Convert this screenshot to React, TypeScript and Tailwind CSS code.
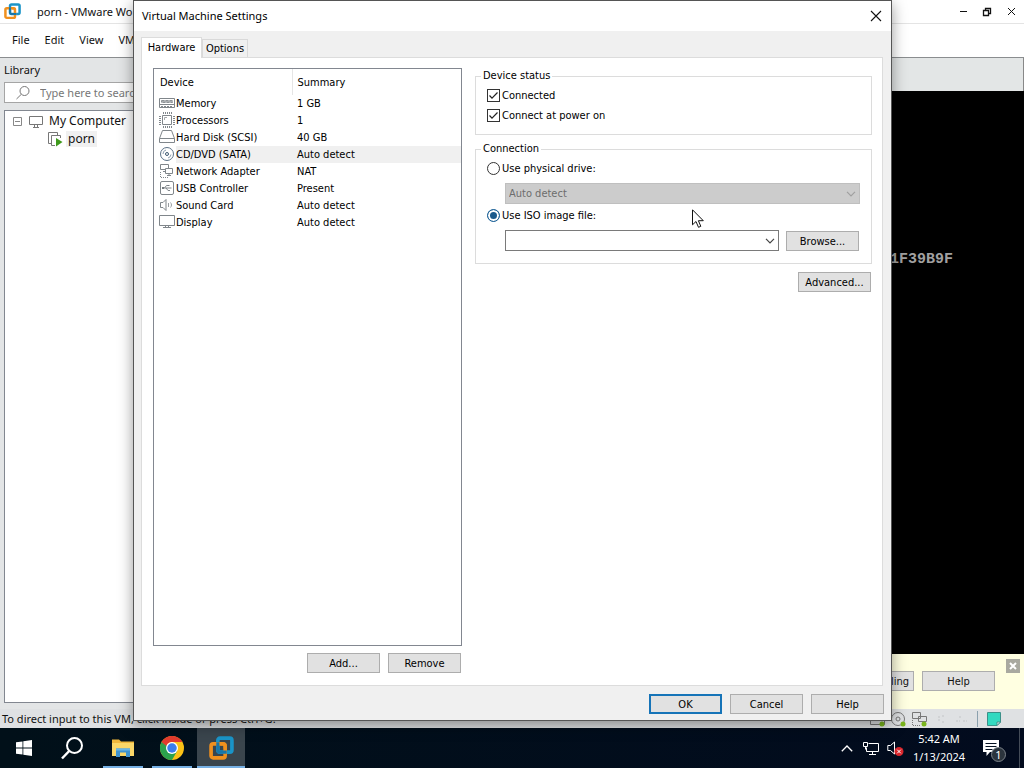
import { useState, type ReactNode } from "react";
import clsx from "clsx";

const green = "#7ab51d";

function VmwareLogo({ className }: { className?: string }) {
  return (
    <svg viewBox="0 0 24 24" className={className} fill="none" strokeWidth="3.500">
      <rect x="8.500" y="2" width="13.500" height="13.500" rx="2" stroke="#1a94c8" />
      <rect x="2" y="7.500" width="13.500" height="13.500" rx="2" stroke="#f0901e" />
      <path d="M8.500 6v7.500a2 2 0 0 0 2 2H17" stroke="#1a76a8" strokeWidth="3" />
      <path d="M11 7.500h2.500a2 2 0 0 1 2 2V12" stroke="#f0901e" strokeWidth="3" />
    </svg>
  );
}

function Chevron({ className }: { className?: string }) {
  return (
    <svg viewBox="0 0 10 6" className={className} fill="none" stroke="currentColor" strokeWidth="1.2">
      <path d="M1 0.800 5 4.800 9 0.800" />
    </svg>
  );
}

function DeviceIcon({ children }: { children: ReactNode }) {
  return (
    <svg viewBox="0 0 17 17" className="block h-[17px] w-[17px] shrink-0" fill="none" stroke="#80868b">
      {children}
    </svg>
  );
}

const devices = [
  {
    name: "Memory",
    summary: "1 GB",
    icon: (
      <>
        <path d="M.5 3.500h15v9H.5zM1 9.500h14" />
        <path d="M2.500 5.500h11v2h-11z" fill="#a9adb0" stroke="#8d9296" strokeDasharray="3 1" />
        <path d="M2 11.500h12" strokeDasharray="2 1" />
      </>
    ),
  },
  {
    name: "Processors",
    summary: "1",
    icon: (
      <>
        <path d="M3.500 3.500h9v9h-9z" />
        <path d="M5.500 8v-2.500h2.500" stroke="#a5a9ac" />
        <path d="M4 1.500h9M4 14.500h9M4 .5h9M4 15.500h9" strokeDasharray="1 1" />
        <path d="M.5 4v9M1.500 4v9M14.500 4v9M15.500 4v9" strokeDasharray="1 1" />
      </>
    ),
  },
  {
    name: "Hard Disk (SCSI)",
    summary: "40 GB",
    icon: <path d="M3.500 1.500h9l3 8v4H.5v-4zM.5 9.500h15" />,
  },
  {
    name: "CD/DVD (SATA)",
    summary: "Auto detect",
    icon: (
      <>
        <circle cx="8" cy="8" r="6.500" stroke="#5b7186" />
        <circle cx="8" cy="8" r="1.500" stroke="#3f5a73" />
        <path d="M4 8a4 4 0 0 1 3-4M12 8.500a4 4 0 0 1-3 3.500" stroke="#8fa0b0" />
      </>
    ),
  },
  {
    name: "Network Adapter",
    summary: "NAT",
    icon: (
      <>
        <path d="M1.500 1.500h8v5h-8zM4 8.500h3" />
        <path d="M6.500 5.500h7v5h-7z" fill="#fff" />
        <path d="M10 11v2M8 12.500h4" />
        <path d="M1.500 9v5.500h8" strokeDasharray="1 1" />
      </>
    ),
  },
  {
    name: "USB Controller",
    summary: "Present",
    icon: (
      <>
        <rect x="1.500" y="1.500" width="13" height="13" rx="1.500" />
        <path d="M3.500 8h9M5.500 8l2-2.500h2M7 8l2 2.500h2" />
        <path d="M3 7h2v2H3zM9 5h1.500v1H9z" fill="#757b80" stroke="none" />
      </>
    ),
  },
  {
    name: "Sound Card",
    summary: "Auto detect",
    icon: (
      <>
        <path d="M1.500 5.500h2.500l3-3v11l-3-3H1.500z" />
        <path d="M9.500 6v4M11.500 5.500c1.300 1.500 1.300 3.500 0 5" stroke="#989da1" />
      </>
    ),
  },
  {
    name: "Display",
    summary: "Auto detect",
    icon: <path d="M.5 1.500h15v10H.5zM4 13.500h8M6.500 12v1M9.500 12v1" />,
  },
];

function DialogButton({ children, primary }: { children: ReactNode; primary?: boolean }) {
  return (
    <button
      type="button"
      className={clsx(
        "flex h-5 w-[73px] shrink-0 items-center justify-center bg-[#e1e1e1] pt-0.5 text-[11px] leading-4",
        primary ? "border-2 border-[#1674b8]" : "border border-[#adadad]"
      )}
    >
      {children}
    </button>
  );
}

function DeviceTable() {
  const [selected, setSelected] = useState("CD/DVD (SATA)");

  return (
    <div className="flex-1 border border-[#828790] bg-white">
      <table className="w-full table-fixed border-collapse text-left">
        <colgroup>
          <col className="w-[138px]" />
          <col />
        </colgroup>
        <thead>
          <tr className="h-[26px]">
            <th className="border-r border-[#e5e5e5] pb-0 pl-1.5 pt-0.5 font-normal">Device</th>
            <th className="pb-0 pl-[5px] pt-0.5 font-normal">Summary</th>
          </tr>
        </thead>
        <tbody>
          {devices.map((device) => (
            <tr key={device.name} className="h-[17px]" onClick={() => setSelected(device.name)}>
              <td className="p-0 pl-[5px]">
                <div className="flex h-[17px] items-center">
                  <DeviceIcon>{device.icon}</DeviceIcon>
                  <span className={clsx("flex-1 whitespace-nowrap leading-[17px]", selected === device.name && "bg-[#f0f0f0]")}>
                    {device.name}
                  </span>
                </div>
              </td>
              <td className={clsx("p-0 pl-[5px] leading-[17px]", selected === device.name && "bg-[#f0f0f0]")}>
                {device.summary}
              </td>
            </tr>
          ))}
        </tbody>
      </table>
    </div>
  );
}

function CheckRow({ id, label }: { id: string; label: string }) {
  return (
    <div className="flex h-5 items-center gap-0.5">
      <span className="relative h-[13px] w-[13px]">
        <input
          id={id}
          type="checkbox"
          defaultChecked
          className="peer block h-[13px] w-[13px] appearance-none border border-[#333] bg-white"
        />
        <svg
          viewBox="0 0 13 13"
          className="pointer-events-none absolute inset-0 hidden peer-checked:block"
          fill="none"
          stroke="#222"
          strokeWidth="1.200"
        >
          <path d="M2.500 6.500 5 9.200 10.500 3.500" />
        </svg>
      </span>
      <label htmlFor={id} className="pt-0.5">{label}</label>
    </div>
  );
}

function RadioRow({ id, label, checked, onChange }: { id: string; label: string; checked: boolean; onChange: () => void }) {
  return (
    <div className="flex h-5 items-center gap-0.5">
      <input
        id={id}
        type="radio"
        name="connection"
        checked={checked}
        onChange={onChange}
        className="h-[13px] w-[13px] appearance-none rounded-full border border-[#333] bg-white checked:border-[#1b6299] checked:bg-[#1b5a8c] checked:shadow-[inset_0_0_0_2px_white]"
      />
      <label htmlFor={id} className="pt-0.5">{label}</label>
    </div>
  );
}

function ConnectionSettings() {
  const [source, setSource] = useState("iso");

  return (
    <div className="flex min-w-0 flex-1 flex-col pt-px">
      <fieldset className="border border-[#dcdcdc] pb-[9px] pl-[11px] pr-3">
        <legend className="-ml-1.5 px-0.5 leading-[14px]">Device status</legend>
        <div className="pt-0.5">
          <CheckRow id="connected" label="Connected" />
          <CheckRow id="power-on" label="Connect at power on" />
        </div>
      </fieldset>

      <fieldset className="mt-[7px] border border-[#dcdcdc] pb-3 pl-[11px] pr-[11px]">
        <legend className="-ml-1.5 px-0.5 leading-[14px]">Connection</legend>
        <div className="pt-0.5">
          <RadioRow id="physical" label="Use physical drive:" checked={source === "physical"} onChange={() => setSource("physical")} />
          <div className="relative ml-[18px] mt-[5px]">
            <select
              aria-label="Physical drive"
              disabled={source !== "physical"}
              className="block h-[21px] w-full appearance-none border border-[#bfbfbf] bg-[#cccccc] px-[3px] pt-px text-[#6d6d6d] opacity-100"
            >
              <option>Auto detect</option>
            </select>
            <Chevron className="pointer-events-none absolute right-1 top-2 h-1.5 w-2.5 text-[#a0a0a0]" />
          </div>
          <div className="mt-px">
            <RadioRow id="iso" label="Use ISO image file:" checked={source === "iso"} onChange={() => setSource("iso")} />
          </div>
          <div className="ml-[18px] mt-[5px] flex items-end gap-[7px] pr-px">
            <div className="relative flex-1">
              <select
                aria-label="ISO image file"
                className="block h-[21px] w-full appearance-none border border-[#7a7a7a] bg-white px-[3px]"
              >
                <option></option>
              </select>
              <Chevron className="pointer-events-none absolute right-1 top-2 h-1.5 w-2.5 text-[#444]" />
            </div>
            <DialogButton>Browse...</DialogButton>
          </div>
        </div>
      </fieldset>

      <div className="mt-2 flex justify-end pr-px">
        <DialogButton>Advanced...</DialogButton>
      </div>
    </div>
  );
}

function SettingsDialog() {
  return (
    <section className="absolute bottom-[47px] left-[133px] right-[132px] top-0 flex flex-col border border-[#555] bg-[#f0f0f0] font-['DejaVu_Sans_Condensed',sans-serif] text-[11px] leading-[14px] text-black shadow-[0_4px_14px_rgba(0,0,0,0.4)]">
      <header className="flex h-[30px] items-center justify-between bg-white pl-2 pr-[9px]">
        <h1 className="font-['Noto_Sans','Open_Sans',sans-serif]">Virtual Machine Settings</h1>
        <button type="button" aria-label="Close" className="h-3 w-3">
          <svg viewBox="0 0 12 12" stroke="#111" strokeWidth="1.100">
            <path d="M1 1l10 10M11 1 1 11" />
          </svg>
        </button>
      </header>

      <div className="flex flex-1 flex-col pl-[7px] pr-2 pt-1.5">
        <div role="tablist" className="flex items-end">
          <button
            type="button"
            role="tab"
            aria-selected="true"
            className="relative -mb-px h-[21px] w-[61px] border border-b-0 border-[#dcdcdc] bg-white leading-4"
          >
            Hardware
          </button>
          <button
            type="button"
            role="tab"
            aria-selected="false"
            className="h-[18px] w-[46px] border border-b-0 border-[#d9d9d9] bg-[#f0f0f0] leading-4"
          >
            Options
          </button>
        </div>
        <div className="flex flex-1 gap-[13px] border border-[#dcdcdc] bg-white pb-3 pl-[11px] pr-2.5 pt-2.5">
          <div className="flex w-[309px] shrink-0 flex-col">
            <DeviceTable />
            <div className="mt-[7px] flex justify-end gap-2 pr-px">
              <DialogButton>Add...</DialogButton>
              <DialogButton>Remove</DialogButton>
            </div>
          </div>
          <ConnectionSettings />
        </div>
      </div>

      <footer className="flex h-[34px] items-start justify-end gap-2 pr-[7px] pt-2">
        <DialogButton primary>OK</DialogButton>
        <DialogButton>Cancel</DialogButton>
        <DialogButton>Help</DialogButton>
      </footer>
    </section>
  );
}

function Library() {
  return (
    <aside className="flex w-[200px] shrink-0 flex-col bg-[#e3e5e6] pb-1.5 pl-1">
      <h2 className="h-6 leading-6">Library</h2>
      <label className="flex h-[21px] items-center border border-[#a5a5a5] bg-white pl-2.5">
        <svg viewBox="0 0 16 16" className="h-4 w-4" fill="none" stroke="#777">
          <circle cx="9.500" cy="6" r="4.500" />
          <path d="M6.300 9.300 1.500 14" />
        </svg>
        <input
          aria-label="Search library"
          placeholder="Type here to search"
          className="ml-[9px] w-32 bg-transparent placeholder:text-[#777]"
        />
      </label>
      <div className="mt-[7px] flex-1 border border-[#828790] bg-white pt-px text-[12px]">
        <div className="flex h-[18px] items-center pl-2">
          <svg viewBox="0 0 9 9" className="h-[9px] w-[9px]" fill="none" stroke="#888">
            <path d="M.5.5h8v8h-8zM2 4.500h5" />
          </svg>
          <svg viewBox="0 0 14 13" className="ml-[7px] h-[13px] w-3.5" fill="none" stroke="#777">
            <path d="M.5 1.500h13v8H.5zM5.500 10v2M8.500 10v2M4 12.500h6" />
          </svg>
          <span className="ml-1.5">My Computer</span>
        </div>
        <div className="flex h-[18px] items-center pl-[43px]">
          <svg viewBox="0 0 15 15" className="h-[15px] w-[15px]" fill="none" stroke="#777">
            <path d="M3 11.500H.5V.5h9V3" />
            <path d="M7 13.500H3.500v-10h9V6" />
            <path d="M8 6l6.500 4L8 14.500z" fill="#3f9a1c" stroke="none" />
          </svg>
          <span className="ml-[3px] bg-[#f0f0f0] px-0.5">porn</span>
        </div>
      </div>
    </aside>
  );
}

function StatusIcons() {
  return (
    <div className="flex items-center pr-[23px]">
      <svg viewBox="0 0 108 18" className="h-[18px] w-[108px]" fill="none" stroke="#777">
        <path d="M3.500 3.500h10l2 6v5h-14v-5z" />
        <circle cx="13" cy="14" r="2.500" fill={green} stroke="none" />
        <circle cx="29" cy="9" r="6.500" />
        <circle cx="29" cy="9" r="2" />
        <circle cx="34" cy="14" r="2.500" fill={green} stroke="none" />
        <path d="M43.500 2.500h8v6h-8zM49.500 6.500h8v5h-8z" />
        <path d="M43.500 10v5.500h8" strokeDasharray="1 1" />
        <circle cx="55" cy="14" r="2.500" fill={green} stroke="none" />
        <g stroke="#c3c5c7">
          <path d="M70 6v6M74 5v2M74 11v2M87 11h4M90 7h3M94 11h4" strokeDasharray="2 1" />
        </g>
      </svg>
      <span className="h-4 w-px bg-[#8ba0ad]" />
      <svg viewBox="0 0 14 14" className="ml-[9px] h-3.5 w-3.5">
        <path d="M.5.5h13V10L10 13.500H.5z" fill="#33d9c0" stroke="#3c8f88" />
        <path d="M10 13.500V10h3.500z" fill="#f4f4f4" stroke="#3c8f88" />
      </svg>
    </div>
  );
}

function MainWindow() {
  return (
    <main className="flex min-h-0 flex-1 flex-col bg-white">
      <header className="flex h-6 items-center border-b border-[#e4e4e4]">
        <VmwareLogo className="ml-1 h-[17px] w-[17px]" />
        <span className="ml-4">porn - VMware Wo</span>
        <svg viewBox="0 0 56 12" className="ml-auto mr-2 h-3 w-14" fill="none" stroke="#111">
          <path d="M0 5.500h7" />
          <path d="M23.500 4.500h5v5h-5z" strokeWidth="1.300" />
          <path d="M25.500 4V2.500h5v5H29" strokeWidth="1.300" />
          <path d="M48 2l7 7M55 2l-7 7" />
        </svg>
      </header>
      <nav className="flex h-[34px] items-center gap-[15px] border-b border-[#8a8d8f] pb-0.5 pl-3">
        <a href="#file">File</a>
        <a href="#edit">Edit</a>
        <a href="#view">View</a>
        <a href="#vm">VM</a>
      </nav>
      <div className="flex min-h-0 flex-1">
        <Library />
        <div className="flex min-w-0 flex-1 flex-col">
          <div className="h-[33px] border-r border-[#888] bg-[#e3e6e6]" />
          <div className="flex flex-1 justify-end bg-black pr-[71px] pt-40 font-['Liberation_Mono',monospace] text-[15px] font-bold leading-[18px] text-[#a0a0a0]">
            1F39B9F
          </div>
          <div className="flex h-[55px] items-start justify-end bg-[#ffffe1] pr-1 pt-[5px] font-['DejaVu_Sans_Condensed',sans-serif]">
            <div className="flex gap-2 pt-3">
              <DialogButton>
                <span className="ml-auto pr-1">ling</span>
              </DialogButton>
              <DialogButton>Help</DialogButton>
            </div>
            <button type="button" aria-label="Dismiss" className="ml-[11px] h-3.5 w-3.5 bg-[#a9a9a0]">
              <svg viewBox="0 0 14 14" stroke="#fff" strokeWidth="2">
                <path d="M4 4l6 6M10 4l-6 6" />
              </svg>
            </button>
          </div>
        </div>
      </div>
      <footer className="flex h-[19px] items-center justify-between bg-[#dfe1e3] pl-0.5">
        <span className="whitespace-nowrap">To direct input to this VM, click inside or press Ctrl+G.</span>
        <StatusIcons />
      </footer>
    </main>
  );
}

function TaskButton({ label, children, running, active }: { label: string; children: ReactNode; running?: boolean; active?: boolean }) {
  return (
    <button
      type="button"
      aria-label={label}
      className={clsx("flex h-10 w-12 flex-col items-center", active && "bg-[#3a454d]")}
    >
      <span className="flex h-[38px] items-center pt-0.5">{children}</span>
      {running && <span className={clsx("h-0.5 bg-[#76b0e4]", active ? "w-12" : "w-10")} />}
    </button>
  );
}

function Taskbar() {
  return (
    <footer className="flex h-10 shrink-0 items-center justify-between bg-linear-to-r from-[#011019] to-[#020b1e] text-white">
      <div className="flex gap-[3px]">
        <div className="flex">
          <TaskButton label="Start">
            <svg viewBox="0 0 16 16" className="h-4 w-4" fill="#fff">
              <path d="M0 2.300 6.500 1.400V7.600H0zM7.300 1.300 16 0v7.600H7.300zM0 8.400h6.500v6.200L0 13.700zM7.300 8.400H16V16l-8.700-1.300z" />
            </svg>
          </TaskButton>
          <TaskButton label="Search">
            <svg viewBox="0 0 24 24" className="h-6 w-6" fill="none" stroke="#fff" strokeWidth="2">
              <circle cx="14.500" cy="9.500" r="7.500" />
              <path d="M9.200 15 2 22.500" strokeWidth="2.500" />
            </svg>
          </TaskButton>
        </div>
        <div className="flex gap-px">
          <TaskButton label="File Explorer" running>
            <svg viewBox="0 0 22 20" className="h-5 w-[22px]">
              <path d="M0 1.500h7l2 2h13V18H0z" fill="#f0b83d" />
              <path d="M0 5h22v13H0z" fill="#fbd768" />
              <path d="M4 19v-8.500h14V19h-4v-4.500H8V19z" fill="#3f93cf" />
              <path d="M4 10.500h14v2H4z" fill="#6cb7e6" />
            </svg>
          </TaskButton>
          <TaskButton label="Chrome" running>
            <svg viewBox="0 0 48 48" className="h-6 w-6">
              <circle cx="24" cy="24" r="24" fill="#fbc116" />
              <path d="M3.200 12A24 24 0 0 0 24 48l10.400-18L24 24z" fill="#2ba24c" />
              <path d="M3.200 12 14 28a11 11 0 0 1 10-16h20.800A24 24 0 0 0 3.200 12z" fill="#e33b2e" />
              <path d="M3.200 12 13.600 30l4-6z" fill="#2ba24c" />
              <circle cx="24" cy="24" r="12" fill="#fff" />
              <circle cx="24" cy="24" r="9.500" fill="#3b7ded" />
            </svg>
          </TaskButton>
          <TaskButton label="VMware Workstation" running active>
            <VmwareLogo className="h-[25px] w-[25px]" />
          </TaskButton>
        </div>
      </div>

      <div className="flex h-10 items-center">
        <svg viewBox="0 0 12 7" className="h-[7px] w-3" fill="none" stroke="#fff" strokeWidth="1.300">
          <path d="M.8 6.300 6 1l5.200 5.300" />
        </svg>
        <svg viewBox="0 0 17 15" className="ml-2.5 h-[15px] w-[17px]" fill="none" stroke="#fff">
          <path d="M5.500 2.500h10v8h-12V6.500M9.500 11v3M6 13.500h7" />
          <path d="M.5 1.500h4v4h-4zM2.500 5.500v3" />
        </svg>
        <svg viewBox="0 0 17 16" className="ml-[7px] h-4 w-[17px]" fill="none" stroke="#fff">
          <path d="M.8 5.500h2.700l4-3.500v12l-4-3.500H.8z" />
          <circle cx="12" cy="11.500" r="4.500" fill="#d8262c" stroke="none" />
          <path d="M10.200 9.700l3.600 3.600M13.800 9.700l-3.600 3.600" />
        </svg>
        <time className="ml-[7px] w-[56px] text-center leading-[18px]">
          5:42 AM
          <br />
          1/13/2024
        </time>
        <button type="button" aria-label="Notifications" className="relative ml-4 h-[18px] w-4">
          <svg viewBox="0 0 16 18" className="block h-[18px] w-4">
            <path d="M0 1h16v12H7l-3.500 4v-4H0z" fill="#fff" />
            <path d="M2.500 4.500h11M2.500 7.500h11M2.500 10.500h7" stroke="#061222" />
          </svg>
          <span className="absolute left-2 top-2 flex h-[15px] w-[15px] items-center justify-center rounded-full border border-[#7b8289] bg-[#2b343d] text-[11px] leading-none">
            1
          </span>
        </button>
        <span className="ml-5 mr-1 h-10 w-px bg-[#444c58]" />
      </div>
    </footer>
  );
}

export default function App() {
  return (
    <div className="relative flex h-screen flex-col overflow-hidden font-['Noto_Sans','Open_Sans',sans-serif] text-[11px] leading-[16px] text-[#111]">
      <MainWindow />
      <SettingsDialog />
      <Taskbar />
      <svg viewBox="0 0 12 19" className="pointer-events-none absolute left-[692px] top-[209px] h-[19px] w-3">
        <path d="M.5.800v15l3.500-3.300 2.500 5.800 2.300-1-2.400-5.600h4.900z" fill="#fff" stroke="#111" />
      </svg>
    </div>
  );
}
